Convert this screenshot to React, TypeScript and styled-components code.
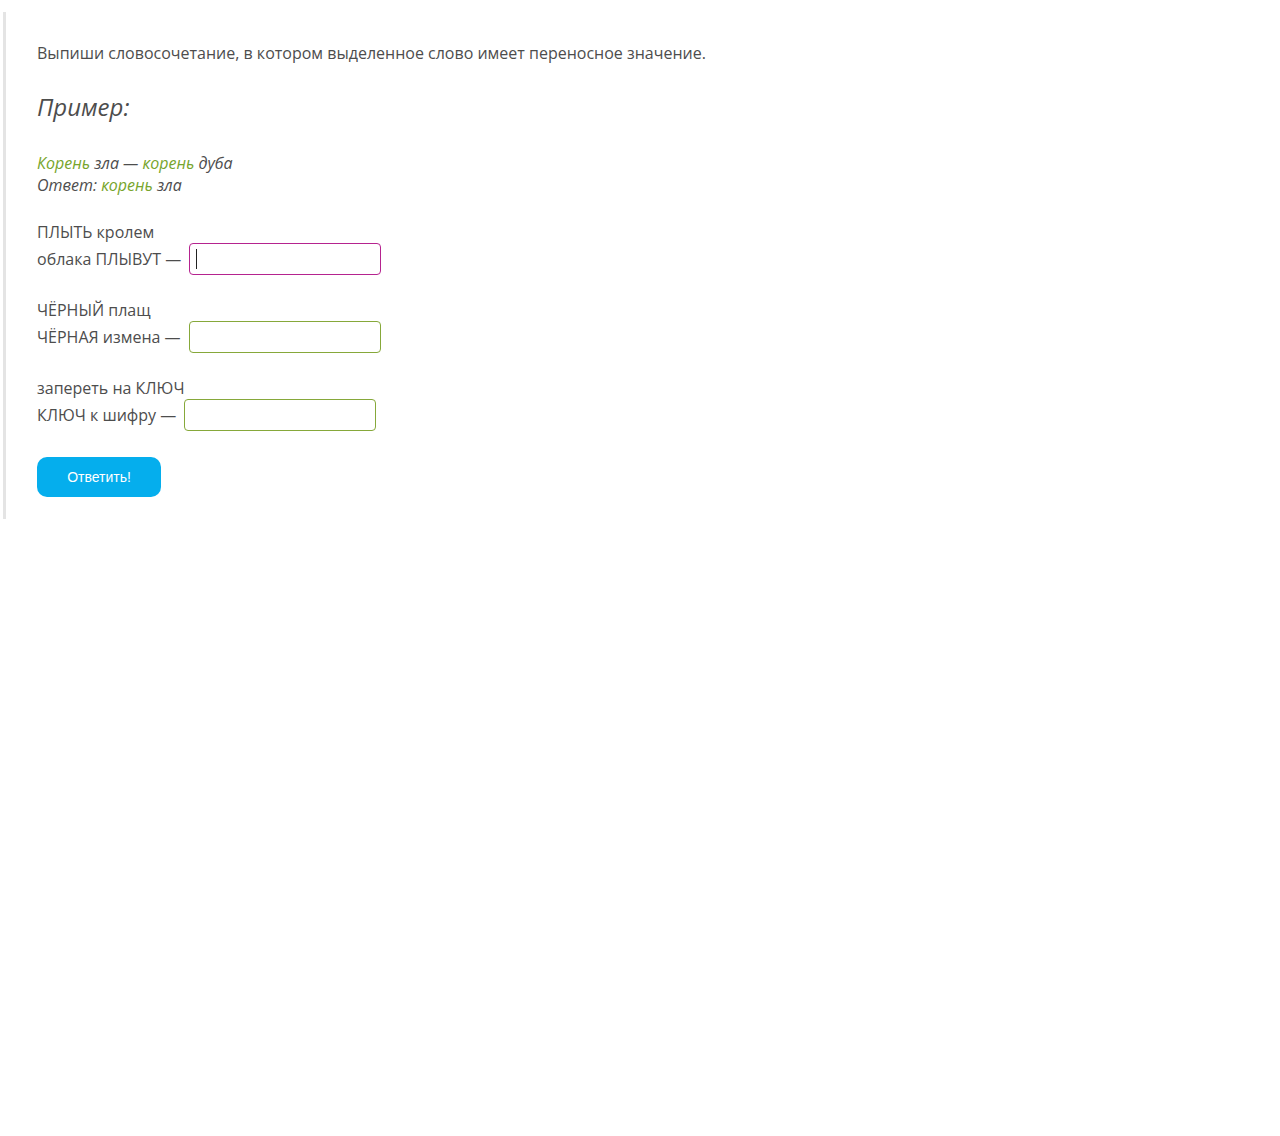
import { FC } from "react";
import styled, { createGlobalStyle } from "styled-components";

const TEXT = "#4d4d4d";
const GREEN = "#77a52c";

const GlobalStyle = createGlobalStyle`
  body {
    margin: 0;
    background: #ffffff;
    font-family: "Open Sans", "Noto Sans", sans-serif;
    color: ${TEXT};
  }
`;

const Panel = styled.div`
  margin: 12px 0 0 3px;
  width: 900px;
  border-left: 3px solid #e4e4e4;
  padding: 30px 0 22px 31px;
`;

const Task = styled.p`
  margin: 0;
  font-size: 16px;
  line-height: 22px;
`;

const ExampleTitle = styled.h3`
  margin: 27px 0 0;
  font-size: 24px;
  line-height: 32px;
  font-weight: 400;
  font-style: italic;
`;

const Example = styled.div`
  margin-top: 29px;
  font-size: 16px;
  line-height: 22px;
  font-style: italic;
`;

const Hl = styled.span`
  color: ${GREEN};
`;

const Item = styled.div`
  margin-top: 25px;
  font-size: 16px;
  line-height: 22px;

  & + & {
    margin-top: 24px;
  }
`;

const Row = styled.div`
  display: flex;
  align-items: center;
  gap: 8px;
`;

const FieldWrap = styled.div`
  position: relative;
  display: flex;
`;

const Field = styled.input<{ $active?: boolean }>`
  box-sizing: border-box;
  width: 192px;
  height: 32px;
  border: 1px solid ${({ $active }) => ($active ? "#b5238f" : "#86a83a")};
  border-radius: 4px;
  padding: 0 6px;
  font: inherit;
  color: ${TEXT};
  outline: none;
`;

const Caret = styled.span`
  position: absolute;
  left: 7px;
  top: 6px;
  width: 1px;
  height: 20px;
  background: #222222;
  pointer-events: none;
`;

const Submit = styled.button`
  margin-top: 26px;
  width: 124px;
  height: 40px;
  border: none;
  border-radius: 10px;
  background: #05aeed;
  color: #ffffff;
  font-family: "Liberation Sans", Arial, sans-serif;
  font-size: 14px;
  cursor: pointer;
`;

const items = [
  { first: "ПЛЫТЬ кролем", second: "облака ПЛЫВУТ —", active: true },
  { first: "ЧЁРНЫЙ плащ", second: "ЧЁРНАЯ измена —" },
  { first: "запереть на КЛЮЧ", second: "КЛЮЧ к шифру —" },
];

const App: FC = () => {
  return (
    <>
      <GlobalStyle />
      <Panel>
        <Task>
          Выпиши словосочетание, в котором выделенное слово имеет переносное
          значение.
        </Task>
        <ExampleTitle>Пример:</ExampleTitle>
        <Example>
          <Hl>Корень</Hl> зла — <Hl>корень</Hl> дуба
          <br />
          Ответ: <Hl>корень</Hl> зла
        </Example>
        {items.map((it) => (
          <Item key={it.first}>
            <div>{it.first}</div>
            <Row>
              <span>{it.second}</span>
              <FieldWrap>
                <Field $active={it.active} />
                {it.active && <Caret />}
              </FieldWrap>
            </Row>
          </Item>
        ))}
        <Submit>Ответить!</Submit>
      </Panel>
    </>
  );
};

export default App;
